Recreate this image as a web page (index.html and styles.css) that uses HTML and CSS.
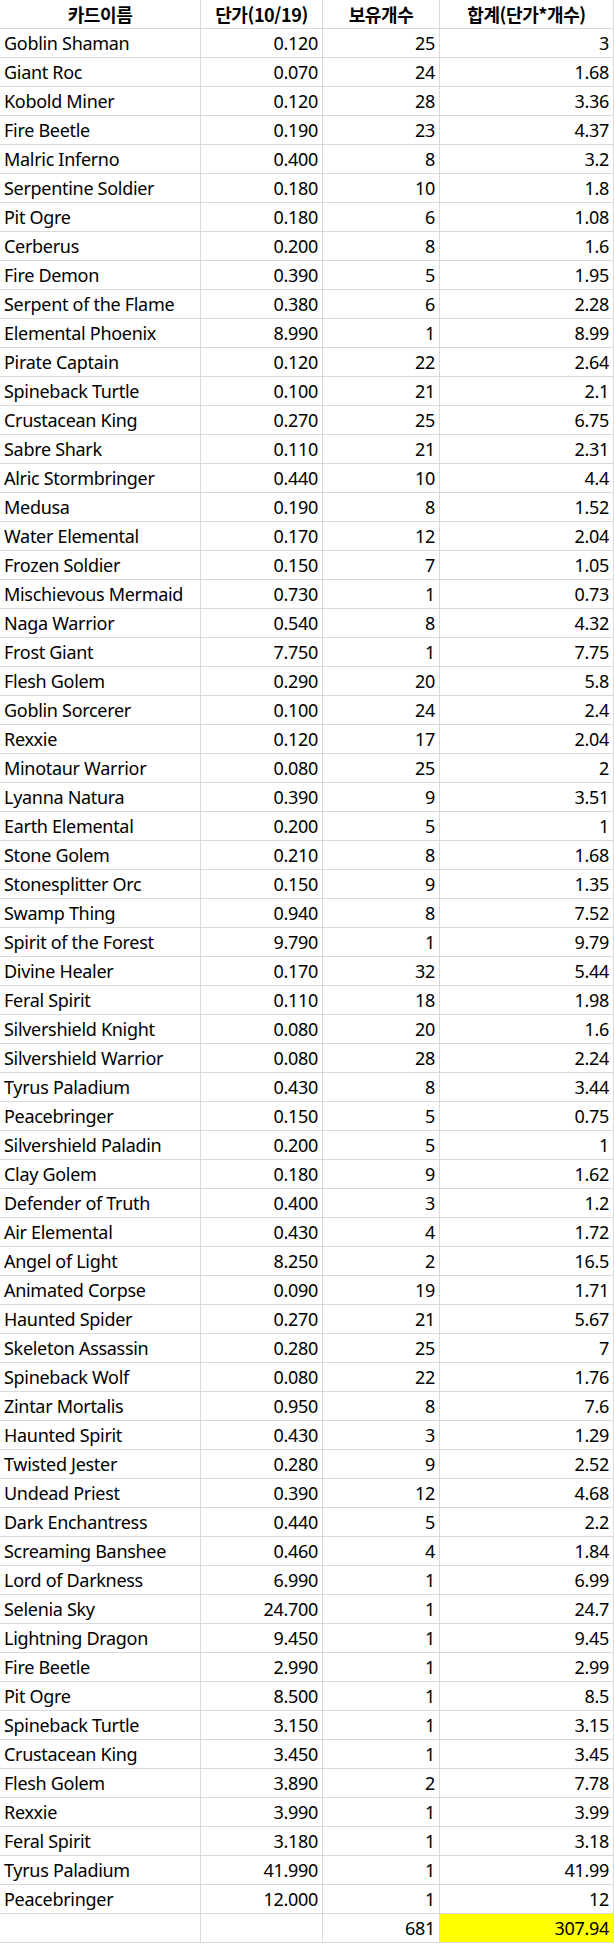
FILE: index.html
```html
<!DOCTYPE html>
<html lang="ko">
<head>
<meta charset="utf-8">
<title>카드 목록</title>
<link rel="stylesheet" href="styles.css">
</head>
<body>
<table class="sheet">
<colgroup>
<col class="c-name"><col class="c-price"><col class="c-qty"><col class="c-sum">
</colgroup>
<thead>
<tr><th>카드이름</th><th>단가(10/19)</th><th>보유개수</th><th>합계(단가*개수)</th></tr>
</thead>
<tbody>
<tr><td>Goblin Shaman</td><td class="num">0.120</td><td class="num">25</td><td class="num">3</td></tr>
<tr><td>Giant Roc</td><td class="num">0.070</td><td class="num">24</td><td class="num">1.68</td></tr>
<tr><td>Kobold Miner</td><td class="num">0.120</td><td class="num">28</td><td class="num">3.36</td></tr>
<tr><td>Fire Beetle</td><td class="num">0.190</td><td class="num">23</td><td class="num">4.37</td></tr>
<tr><td>Malric Inferno</td><td class="num">0.400</td><td class="num">8</td><td class="num">3.2</td></tr>
<tr><td>Serpentine Soldier</td><td class="num">0.180</td><td class="num">10</td><td class="num">1.8</td></tr>
<tr><td>Pit Ogre</td><td class="num">0.180</td><td class="num">6</td><td class="num">1.08</td></tr>
<tr><td>Cerberus</td><td class="num">0.200</td><td class="num">8</td><td class="num">1.6</td></tr>
<tr><td>Fire Demon</td><td class="num">0.390</td><td class="num">5</td><td class="num">1.95</td></tr>
<tr><td>Serpent of the Flame</td><td class="num">0.380</td><td class="num">6</td><td class="num">2.28</td></tr>
<tr><td>Elemental Phoenix</td><td class="num">8.990</td><td class="num">1</td><td class="num">8.99</td></tr>
<tr><td>Pirate Captain</td><td class="num">0.120</td><td class="num">22</td><td class="num">2.64</td></tr>
<tr><td>Spineback Turtle</td><td class="num">0.100</td><td class="num">21</td><td class="num">2.1</td></tr>
<tr><td>Crustacean King</td><td class="num">0.270</td><td class="num">25</td><td class="num">6.75</td></tr>
<tr><td>Sabre Shark</td><td class="num">0.110</td><td class="num">21</td><td class="num">2.31</td></tr>
<tr><td>Alric Stormbringer</td><td class="num">0.440</td><td class="num">10</td><td class="num">4.4</td></tr>
<tr><td>Medusa</td><td class="num">0.190</td><td class="num">8</td><td class="num">1.52</td></tr>
<tr><td>Water Elemental</td><td class="num">0.170</td><td class="num">12</td><td class="num">2.04</td></tr>
<tr><td>Frozen Soldier</td><td class="num">0.150</td><td class="num">7</td><td class="num">1.05</td></tr>
<tr><td>Mischievous Mermaid</td><td class="num">0.730</td><td class="num">1</td><td class="num">0.73</td></tr>
<tr><td>Naga Warrior</td><td class="num">0.540</td><td class="num">8</td><td class="num">4.32</td></tr>
<tr><td>Frost Giant</td><td class="num">7.750</td><td class="num">1</td><td class="num">7.75</td></tr>
<tr><td>Flesh Golem</td><td class="num">0.290</td><td class="num">20</td><td class="num">5.8</td></tr>
<tr><td>Goblin Sorcerer</td><td class="num">0.100</td><td class="num">24</td><td class="num">2.4</td></tr>
<tr><td>Rexxie</td><td class="num">0.120</td><td class="num">17</td><td class="num">2.04</td></tr>
<tr><td>Minotaur Warrior</td><td class="num">0.080</td><td class="num">25</td><td class="num">2</td></tr>
<tr><td>Lyanna Natura</td><td class="num">0.390</td><td class="num">9</td><td class="num">3.51</td></tr>
<tr><td>Earth Elemental</td><td class="num">0.200</td><td class="num">5</td><td class="num">1</td></tr>
<tr><td>Stone Golem</td><td class="num">0.210</td><td class="num">8</td><td class="num">1.68</td></tr>
<tr><td>Stonesplitter Orc</td><td class="num">0.150</td><td class="num">9</td><td class="num">1.35</td></tr>
<tr><td>Swamp Thing</td><td class="num">0.940</td><td class="num">8</td><td class="num">7.52</td></tr>
<tr><td>Spirit of the Forest</td><td class="num">9.790</td><td class="num">1</td><td class="num">9.79</td></tr>
<tr><td>Divine Healer</td><td class="num">0.170</td><td class="num">32</td><td class="num">5.44</td></tr>
<tr><td>Feral Spirit</td><td class="num">0.110</td><td class="num">18</td><td class="num">1.98</td></tr>
<tr><td>Silvershield Knight</td><td class="num">0.080</td><td class="num">20</td><td class="num">1.6</td></tr>
<tr><td>Silvershield Warrior</td><td class="num">0.080</td><td class="num">28</td><td class="num">2.24</td></tr>
<tr><td>Tyrus Paladium</td><td class="num">0.430</td><td class="num">8</td><td class="num">3.44</td></tr>
<tr><td>Peacebringer</td><td class="num">0.150</td><td class="num">5</td><td class="num">0.75</td></tr>
<tr><td>Silvershield Paladin</td><td class="num">0.200</td><td class="num">5</td><td class="num">1</td></tr>
<tr><td>Clay Golem</td><td class="num">0.180</td><td class="num">9</td><td class="num">1.62</td></tr>
<tr><td>Defender of Truth</td><td class="num">0.400</td><td class="num">3</td><td class="num">1.2</td></tr>
<tr><td>Air Elemental</td><td class="num">0.430</td><td class="num">4</td><td class="num">1.72</td></tr>
<tr><td>Angel of Light</td><td class="num">8.250</td><td class="num">2</td><td class="num">16.5</td></tr>
<tr><td>Animated Corpse</td><td class="num">0.090</td><td class="num">19</td><td class="num">1.71</td></tr>
<tr><td>Haunted Spider</td><td class="num">0.270</td><td class="num">21</td><td class="num">5.67</td></tr>
<tr><td>Skeleton Assassin</td><td class="num">0.280</td><td class="num">25</td><td class="num">7</td></tr>
<tr><td>Spineback Wolf</td><td class="num">0.080</td><td class="num">22</td><td class="num">1.76</td></tr>
<tr><td>Zintar Mortalis</td><td class="num">0.950</td><td class="num">8</td><td class="num">7.6</td></tr>
<tr><td>Haunted Spirit</td><td class="num">0.430</td><td class="num">3</td><td class="num">1.29</td></tr>
<tr><td>Twisted Jester</td><td class="num">0.280</td><td class="num">9</td><td class="num">2.52</td></tr>
<tr><td>Undead Priest</td><td class="num">0.390</td><td class="num">12</td><td class="num">4.68</td></tr>
<tr><td>Dark Enchantress</td><td class="num">0.440</td><td class="num">5</td><td class="num">2.2</td></tr>
<tr><td>Screaming Banshee</td><td class="num">0.460</td><td class="num">4</td><td class="num">1.84</td></tr>
<tr><td>Lord of Darkness</td><td class="num">6.990</td><td class="num">1</td><td class="num">6.99</td></tr>
<tr><td>Selenia Sky</td><td class="num">24.700</td><td class="num">1</td><td class="num">24.7</td></tr>
<tr><td>Lightning Dragon</td><td class="num">9.450</td><td class="num">1</td><td class="num">9.45</td></tr>
<tr><td>Fire Beetle</td><td class="num">2.990</td><td class="num">1</td><td class="num">2.99</td></tr>
<tr><td>Pit Ogre</td><td class="num">8.500</td><td class="num">1</td><td class="num">8.5</td></tr>
<tr><td>Spineback Turtle</td><td class="num">3.150</td><td class="num">1</td><td class="num">3.15</td></tr>
<tr><td>Crustacean King</td><td class="num">3.450</td><td class="num">1</td><td class="num">3.45</td></tr>
<tr><td>Flesh Golem</td><td class="num">3.890</td><td class="num">2</td><td class="num">7.78</td></tr>
<tr><td>Rexxie</td><td class="num">3.990</td><td class="num">1</td><td class="num">3.99</td></tr>
<tr><td>Feral Spirit</td><td class="num">3.180</td><td class="num">1</td><td class="num">3.18</td></tr>
<tr><td>Tyrus Paladium</td><td class="num">41.990</td><td class="num">1</td><td class="num">41.99</td></tr>
<tr><td>Peacebringer</td><td class="num">12.000</td><td class="num">1</td><td class="num">12</td></tr>
</tbody>
<tfoot>
<tr><td></td><td></td><td class="num">681</td><td class="num total">307.94</td></tr>
</tfoot>
</table>
</body>
</html>
```
FILE: styles.css
```css
html, body {
  margin: 0;
  padding: 0;
  background: #ffffff;
}

.sheet {
  border-collapse: separate;
  border-spacing: 0;
  table-layout: fixed;
  width: 614px;
  font-family: "Noto Sans", "Noto Sans CJK KR", sans-serif;
  font-size: 18px;
  letter-spacing: -0.3px;
  color: #000000;
}

.c-name { width: 201px; }
.c-price { width: 122px; }
.c-qty { width: 117px; }
.c-sum { width: 174px; }

.sheet th,
.sheet td {
  box-sizing: border-box;
  height: 29px;
  padding: 0 4px 0 4px;
  border-right: 1px solid #d9d9d9;
  border-bottom: 1px solid #d9d9d9;
  white-space: nowrap;
  overflow: hidden;
  line-height: 20px;
  vertical-align: middle;
}

.sheet th {
  font-family: "Noto Sans CJK KR", "Noto Sans", sans-serif;
  font-weight: 700;
  font-size: 18px;
  letter-spacing: -0.4px;
  text-align: center;
}

.sheet td {
  text-align: left;
}

.sheet td.num {
  text-align: right;
}

.sheet td.total {
  background: #ffff00;
}
```
